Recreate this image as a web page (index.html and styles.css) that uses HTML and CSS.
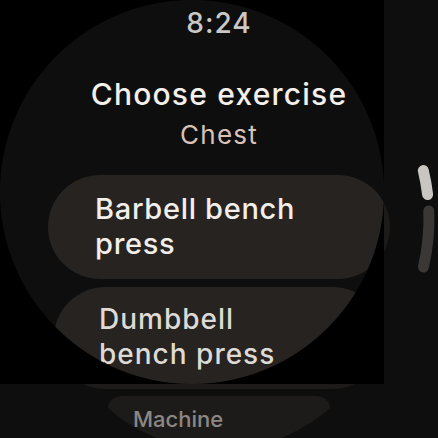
FILE: index.html
```html
<!DOCTYPE html>
<html lang="en">
<head>
<meta charset="utf-8">
<title>Choose exercise</title>
<link rel="stylesheet" href="styles.css">
</head>
<body>
<div class="watch">
  <main class="screen">
    <div class="time">8:24</div>
    <h1 class="title">Choose exercise</h1>
    <div class="subtitle">Chest</div>
    <ul class="list">
      <li class="chip chip-main"><span class="chip-label">Barbell bench press</span></li>
      <li class="chip chip-near"><span class="chip-label">Dumbbell bench press</span></li>
      <li class="chip chip-far"><span class="chip-label">Machine</span></li>
    </ul>
  </main>
  <div class="mask"></div>
  <div class="dim dim-right"></div>
  <div class="dim dim-bottom"></div>
  <svg class="scrollbar" width="438" height="438" viewBox="0 0 438 438" aria-hidden="true">
    <path class="track" d="M 428.8 211 A 210 210 0 0 1 423.4 267"/>
    <path class="thumb" d="M 423.3 170.5 A 210 210 0 0 1 427.6 194.5"/>
  </svg>
</div>
</body>
</html>
```
FILE: styles.css
```css
* { box-sizing: border-box; }
html, body {
  margin: 0;
  padding: 0;
  background: #0e0e0e;
}
body {
  width: 438px;
  height: 438px;
  overflow: hidden;
  font-family: Inter, "Noto Sans", Roboto, sans-serif;
}
.watch {
  position: relative;
  width: 438px;
  height: 438px;
  overflow: hidden;
  background: #0e0e0e;
}
.screen {
  display: flex;
  flex-direction: column;
  align-items: center;
  padding-top: 9px;
}
.time {
  font-size: 28px;
  line-height: 28px;
  font-weight: 500;
  color: #cac8c6;
  letter-spacing: 1px;
}
.title {
  margin: 39px 0 0;
  font-size: 30px;
  line-height: 36px;
  font-weight: 500;
  color: #f3efeb;
  letter-spacing: 1.2px;
}
.subtitle {
  margin-top: 7px;
  font-size: 26px;
  line-height: 32px;
  font-weight: 400;
  color: #d9c3b9;
  letter-spacing: 1.2px;
}
.list {
  list-style: none;
  margin: 24px 0 0;
  padding: 0;
  display: flex;
  flex-direction: column;
  align-items: center;
}
.chip {
  background: #262320;
  color: #f2eeea;
  font-weight: 500;
  display: flex;
  align-items: flex-start;
}
.chip-main {
  width: 342px;
  height: 104px;
  border-radius: 52px;
  padding: 16px 70px 0 47px;
  font-size: 29px;
  line-height: 35px;
  letter-spacing: 0.7px;
}
.chip-near {
  margin-top: 8px;
  width: 330px;
  height: 102px;
  border-radius: 51px;
  padding: 15px 70px 0 45px;
  font-size: 28px;
  line-height: 35px;
  letter-spacing: 1px;
  color: #dedad6;
}
.chip-far {
  margin-top: 7px;
  width: 222px;
  height: 80px;
  border-radius: 14px 14px 0 0 / 12px 12px 0 0;
  padding: 10px 20px 0 25px;
  font-size: 22px;
  line-height: 26px;
  color: #dcd8d4;
  clip-path: circle(168px at 111px -114px);
}
.mask {
  position: absolute;
  left: 0;
  top: 0;
  width: 384px;
  height: 384px;
  background: radial-gradient(circle at 192px 192px, transparent 191.5px, #000 192.5px);
  pointer-events: none;
}
.dim {
  position: absolute;
  background: rgba(14, 14, 14, 0.4);
  pointer-events: none;
}
.dim-right {
  left: 384px;
  top: 0;
  width: 54px;
  height: 438px;
}
.dim-bottom {
  left: 0;
  top: 384px;
  width: 384px;
  height: 54px;
}
.scrollbar {
  position: absolute;
  left: 0;
  top: 0;
  pointer-events: none;
}
.scrollbar path {
  fill: none;
  stroke-width: 11;
  stroke-linecap: round;
}
.track { stroke: #3a3735; }
.thumb { stroke: #c9c5c1; }
```
